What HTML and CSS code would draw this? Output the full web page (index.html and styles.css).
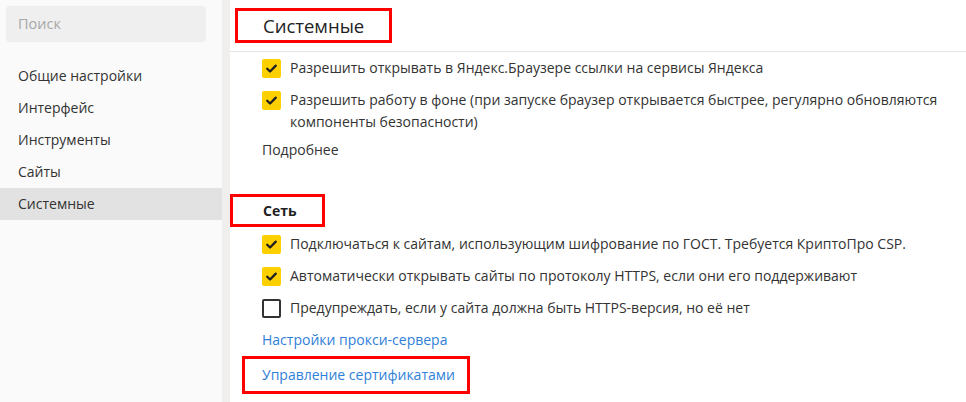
FILE: index.html
```html
<!DOCTYPE html>
<html lang="ru">
<head>
<meta charset="utf-8">
<link rel="stylesheet" href="styles.css">
</head>
<body>
<div class="page">
  <aside class="sidebar">
    <div class="search">Поиск</div>
    <nav class="nav">
      <div class="nav-item">Общие настройки</div>
      <div class="nav-item">Интерфейс</div>
      <div class="nav-item">Инструменты</div>
      <div class="nav-item">Сайты</div>
      <div class="nav-item active">Системные</div>
    </nav>
  </aside>
  <div class="divider"></div>
  <main class="main">
    <header class="header">
      <h1 class="title mark">Системные</h1>
    </header>
    <section class="section first">
      <label class="option">
        <span class="box checked"><svg viewBox="0 0 20 20"><path d="M5.5 10.2l3 3 6-6.2" fill="none" stroke="#1e1e1e" stroke-width="2.4" stroke-linecap="round" stroke-linejoin="round"/></svg></span>
        <span class="text">Разрешить открывать в Яндекс.Браузере ссылки на сервисы Яндекса</span>
      </label>
      <label class="option">
        <span class="box checked"><svg viewBox="0 0 20 20"><path d="M5.5 10.2l3 3 6-6.2" fill="none" stroke="#1e1e1e" stroke-width="2.4" stroke-linecap="round" stroke-linejoin="round"/></svg></span>
        <span class="text">Разрешить работу в фоне (при запуске браузер открывается быстрее, регулярно обновляются компоненты безопасности)</span>
      </label>
      <div class="more">Подробнее</div>
    </section>
    <section class="section net">
      <h2 class="subtitle mark">Сеть</h2>
      <label class="option">
        <span class="box checked"><svg viewBox="0 0 20 20"><path d="M5.5 10.2l3 3 6-6.2" fill="none" stroke="#1e1e1e" stroke-width="2.4" stroke-linecap="round" stroke-linejoin="round"/></svg></span>
        <span class="text">Подключаться к сайтам, использующим шифрование по ГОСТ. Требуется КриптоПро CSP.</span>
      </label>
      <label class="option">
        <span class="box checked"><svg viewBox="0 0 20 20"><path d="M5.5 10.2l3 3 6-6.2" fill="none" stroke="#1e1e1e" stroke-width="2.4" stroke-linecap="round" stroke-linejoin="round"/></svg></span>
        <span class="text">Автоматически открывать сайты по протоколу HTTPS, если они его поддерживают</span>
      </label>
      <label class="option">
        <span class="box"></span>
        <span class="text">Предупреждать, если у сайта должна быть HTTPS-версия, но её нет</span>
      </label>
      <a class="link">Настройки прокси-сервера</a>
      <a class="link mark cert">Управление сертификатами</a>
    </section>
  </main>
</div>
</body>
</html>
```

FILE: styles.css
```css
* { box-sizing: border-box; }
html, body {
  margin: 0;
  padding: 0;
  background: #fff;
}
body {
  font-family: "Open Sans", "Noto Sans", sans-serif;
  font-size: 14px;
  color: #333;
}
.page {
  display: flex;
  height: 402px;
  overflow: hidden;
}
.sidebar {
  width: 222px;
  flex: none;
  background: #fafafa;
  padding-top: 6px;
}
.search {
  margin-left: 6px;
  width: 200px;
  height: 36px;
  background: #efefef;
  border-radius: 4px;
  color: #a8a8a8;
  font-size: 14.5px;
  line-height: 36px;
  padding-left: 12px;
}
.nav {
  margin-top: 18px;
}
.nav-item {
  height: 32px;
  line-height: 32px;
  padding-left: 18px;
  color: #333;
}
.nav-item.active {
  background: #e2e2e2;
}
.divider {
  width: 8px;
  flex: none;
  background: #f0efee;
}
.main {
  flex: 1;
  min-width: 0;
}
.header {
  height: 52px;
  border-bottom: 1px solid #e6e6e6;
  padding: 8px 0 0 5px;
}
.mark {
  border: 3px solid #f00;
}
.title {
  display: inline-block;
  margin: 0;
  font-weight: 400;
  font-size: 18.5px;
  color: #222;
  height: 35px;
  line-height: 29px;
  padding: 0 25px 0 25px;
  width: 157px;
}
.section {
  padding-left: 32px;
}
.section.first {
  padding-top: 5px;
}
.option {
  display: flex;
  align-items: flex-start;
  line-height: 22px;
  margin-bottom: 10px;
}
.box {
  width: 19px;
  height: 19px;
  flex: none;
  margin-top: 2px;
  margin-right: 9px;
  border: 2px solid #333;
  border-radius: 2px;
}
.box.checked {
  background: #ffd000;
  border: none;
}
.box svg {
  display: block;
  width: 19px;
  height: 19px;
}
.text {
  color: #333;
}
.more {
  line-height: 22px;
  margin-top: -4px;
}
.net {
  padding-left: 0;
  margin-top: 33px;
}
.subtitle {
  display: inline-block;
  margin: 0;
  font-size: 14px;
  font-weight: 700;
  color: #222;
  width: 95px;
  height: 33px;
  line-height: 27px;
  padding-left: 30px;
}
.net .option {
  margin-left: 32px;
}
.net .subtitle + .option {
  margin-top: 6px;
}
.link {
  display: block;
  color: #2f80d9;
  line-height: 22px;
  margin-left: 32px;
}
.link.cert {
  display: block;
  margin-left: 12px;
  margin-top: 5px;
  width: 228px;
  height: 38px;
  line-height: 32px;
  padding-left: 17px;
}
```
